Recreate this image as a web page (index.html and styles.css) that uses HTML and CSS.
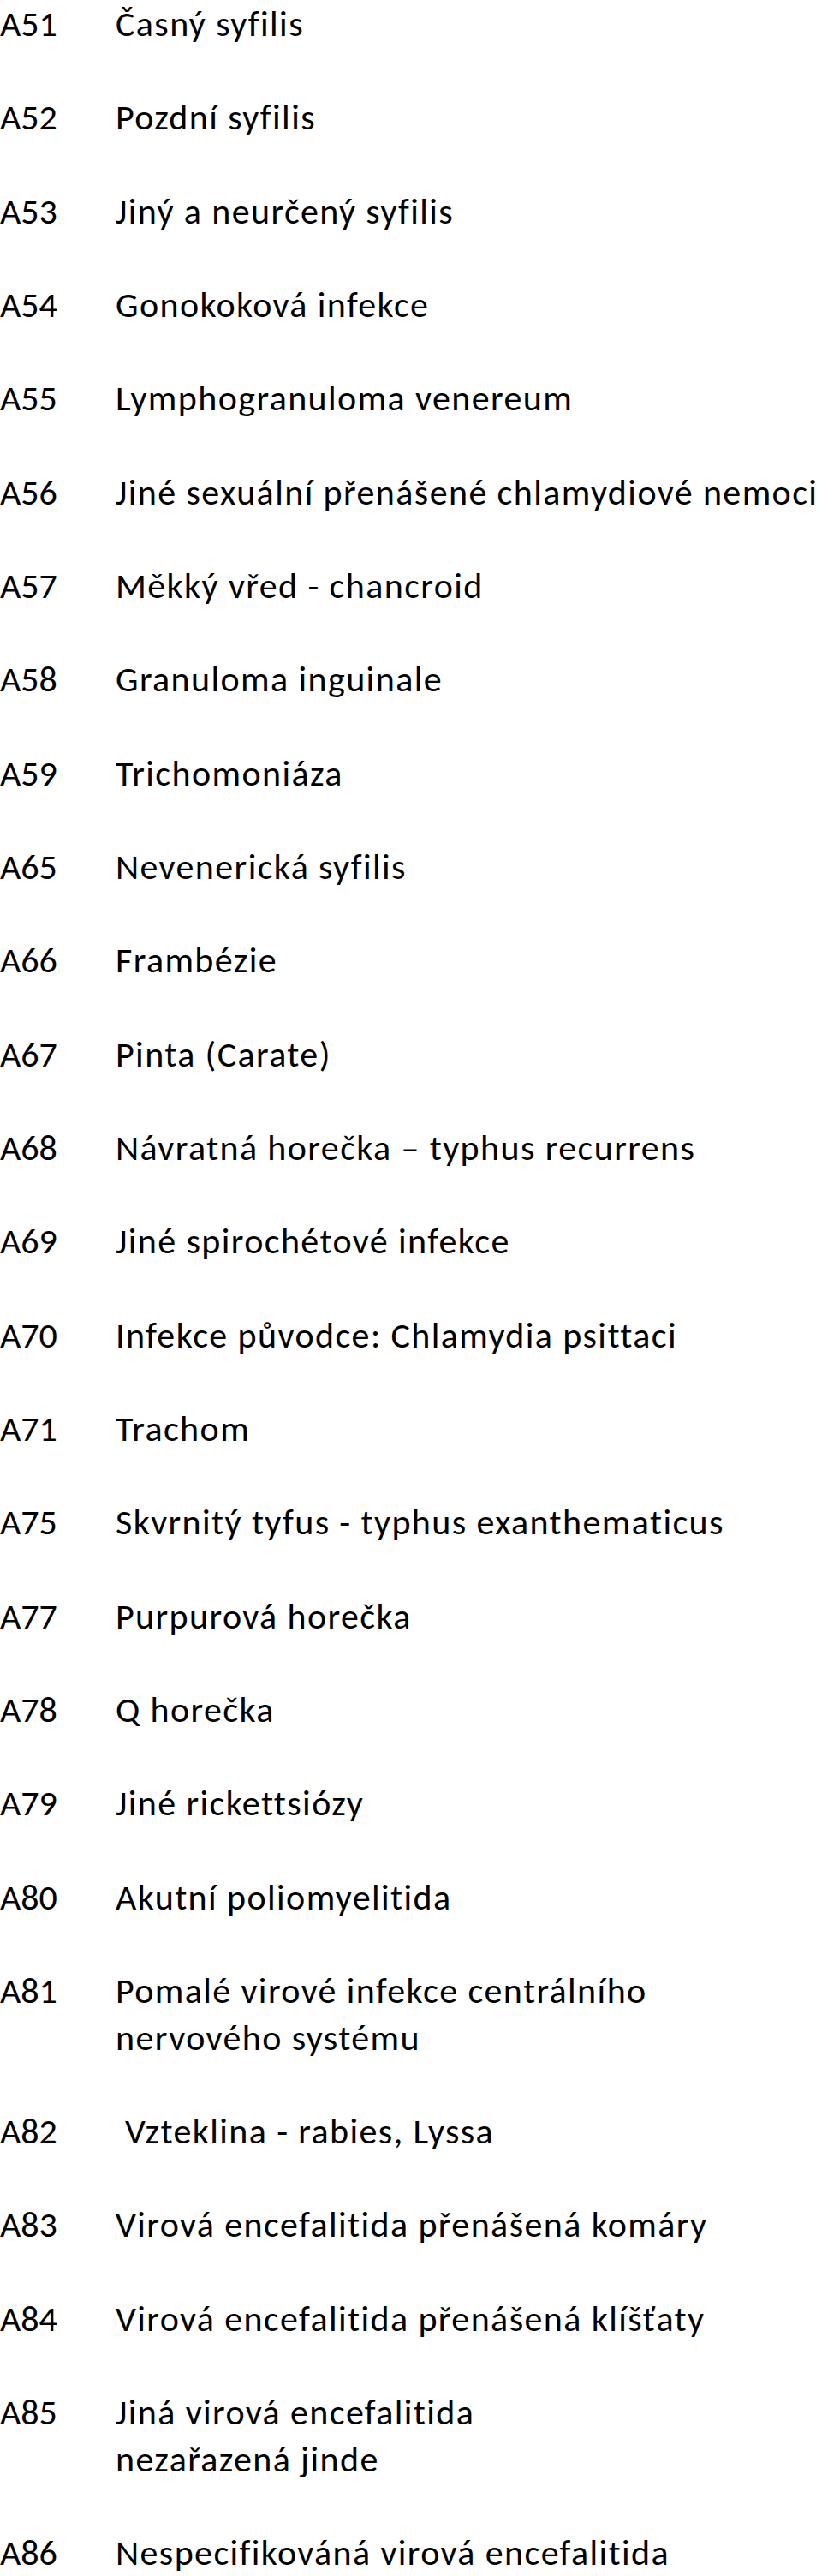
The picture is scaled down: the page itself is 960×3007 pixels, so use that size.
FILE: index.html
```html
<!DOCTYPE html>
<html>

<head>
    <meta charset="UTF-8">
    <title>Infekce A51 - A86</title>
    <link rel="stylesheet" href="styles.css">
</head>

<body>
    <div class="list">
        <div class="row"><b>A51</b><span>Časný syfilis</span></div>
        <div class="row"><b>A52</b><span>Pozdní syfilis</span></div>
        <div class="row"><b>A53</b><span>Jiný a neurčený syfilis</span></div>
        <div class="row"><b>A54</b><span>Gonokoková infekce</span></div>
        <div class="row"><b>A55</b><span>Lymphogranuloma venereum</span></div>
        <div class="row"><b>A56</b><span>Jiné sexuální přenášené chlamydiové nemoci</span></div>
        <div class="row"><b>A57</b><span>Měkký vřed - chancroid</span></div>
        <div class="row"><b>A58</b><span>Granuloma inguinale</span></div>
        <div class="row"><b>A59</b><span>Trichomoniáza</span></div>
        <div class="row"><b>A65</b><span>Nevenerická syfilis</span></div>
        <div class="row"><b>A66</b><span>Frambézie</span></div>
        <div class="row"><b>A67</b><span>Pinta (Carate)</span></div>
        <div class="row"><b>A68</b><span>Návratná horečka – typhus recurrens</span></div>
        <div class="row"><b>A69</b><span>Jiné spirochétové infekce</span></div>
        <div class="row"><b>A70</b><span>Infekce původce: Chlamydia psittaci</span></div>
        <div class="row"><b>A71</b><span>Trachom</span></div>
        <div class="row"><b>A75</b><span>Skvrnitý tyfus - typhus exanthematicus</span></div>
        <div class="row"><b>A77</b><span>Purpurová horečka</span></div>
        <div class="row"><b>A78</b><span>Q horečka</span></div>
        <div class="row"><b>A79</b><span>Jiné rickettsiózy</span></div>
        <div class="row"><b>A80</b><span>Akutní poliomyelitida</span></div>
        <div class="row"><b>A81</b><span>Pomalé virové infekce centrálního<br>nervového systému</span></div>
        <div class="row"><b>A82</b><span>&nbsp;Vzteklina - rabies, Lyssa</span></div>
        <div class="row"><b>A83</b><span>Virová encefalitida přenášená komáry</span></div>
        <div class="row"><b>A84</b><span>Virová encefalitida přenášená klíšťaty</span></div>
        <div class="row"><b>A85</b><span>Jiná virová encefalitida<br>nezařazená jinde</span></div>
        <div class="row"><b>A86</b><span>Nespecifikováná virová encefalitida</span></div>
    </div>
</body>

</html>
```

FILE: styles.css
```css
* {
    font-family: Carlito, 'Open Sans', sans-serif;
    color: #000;
}
body {
    margin: 0;
    background: white;
}
.list {
    padding-top: 1px;
}
.row {
    display: grid;
    grid-template-columns: 135px auto;
    font-size: 42px;
    line-height: 54.67px;
    margin-bottom: 54.67px;
    white-space: nowrap;
}
.row b {
    font-weight: normal;
}
.row span {
    letter-spacing: 1.4px;
    font-variant-ligatures: none;
}
```
